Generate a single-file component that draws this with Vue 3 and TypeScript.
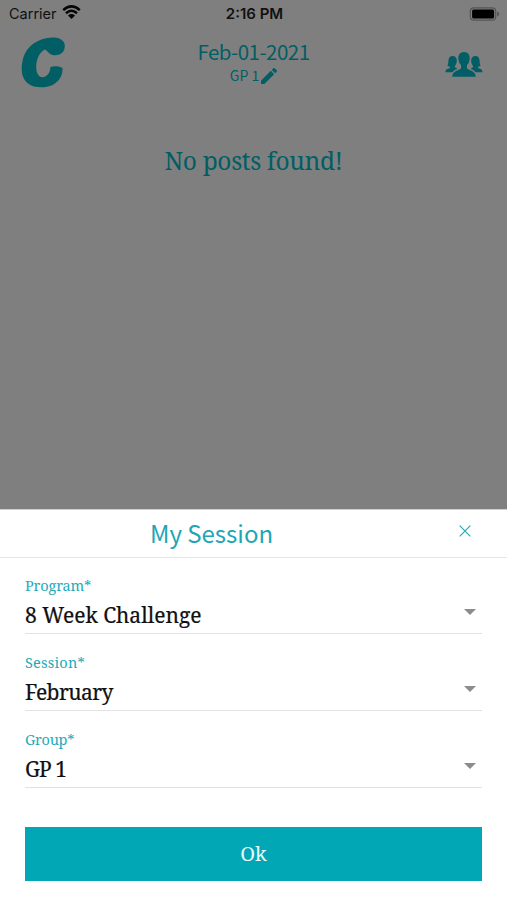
<script setup lang="ts">
import { ref } from 'vue'

interface Field {
  id: string
  label: string
  value: string
}

const date = ref('Feb-01-2021')
const group = ref('GP 1')
const fields = ref<Field[]>([
  { id: 'program', label: 'Program*', value: '8 Week Challenge' },
  { id: 'session', label: 'Session*', value: 'February' },
  { id: 'team', label: 'Group*', value: 'GP 1' },
])
</script>

<template>
  <div class="screen">
    <section class="feed">
      <div class="status">
        <div class="carrier">
          <span>Carrier</span>
          <svg class="wifi" width="19" height="15" viewBox="0 0 19 15">
            <path d="M1.2 5.1Q9.5-2.3 17.8 5.1M4 8.2Q9.5 3.4 15 8.2" fill="none" stroke="#050505" stroke-width="2.5" />
            <path d="M6 10.4Q9.5 7.5 13 10.4L9.5 14Z" fill="#050505" />
          </svg>
        </div>
        <span class="clock">2:16 PM</span>
        <svg class="battery" width="31" height="14" viewBox="0 0 31 14">
          <rect x="1.3" y=".8" width="25.4" height="12.4" rx="3.5" fill="none" stroke="#555" stroke-width="1.2" />
          <rect x="3.1" y="2.4" width="22" height="9.2" rx="1.6" fill="#000" />
          <path d="M28.2 4.6Q30.4 5.4 30.4 7T28.2 9.4Z" fill="#555" />
        </svg>
      </div>
      <header class="header">
        <svg class="logo" width="46" height="53" viewBox="0 0 46 53">
          <path d="M26 1C33-.2 40 .5 42.8 5C45 9.5 43.5 15.5 38.5 17.6C34 19.2 30 18 28 16C26.3 14.3 25 12.6 23.8 12.4C18.5 15 15.4 22 15.2 29.5C15.2 36 17.5 40.3 21.5 40.3C25.5 40.3 29.2 36 29.4 30C33 28.8 38 28.8 41.5 31C42 38 38.5 44 32.5 47.5C26 51.2 13.5 51.7 7 46.5C1 41.7-.1 34 1.1 26C3.1 12.5 12 3.7 26 1Z" fill="#015e65" />
        </svg>
        <div class="heading">
          <div class="date">{{ date }}</div>
          <div class="group">
            <span>{{ group }}</span>
            <svg width="16" height="16" viewBox="3 3 18 18">
              <path d="M3 17.25V21h3.75L17.8 9.94 14.06 6.2 3 17.25ZM20.7 7.04a1 1 0 0 0 0-1.41L18.37 3.3a1 1 0 0 0-1.41 0L15.13 5.12l3.75 3.75 1.82-1.83Z" fill="#015e65" />
            </svg>
          </div>
        </div>
        <svg class="people" width="38" height="26" viewBox="0 0 38 26">
          <g fill="#015e65">
            <path d="M7.5 4C10.6 4 12 6 11.8 9C11.7 12.6 9.8 13 10 15.2L12.5 16.8Q8.5 18.2 7.5 20.3H.5C.5 17.4 2.3 17 5 16.1V14.8L2.4 14Q3.4 12.7 3.4 9C3.4 5.9 5 4 7.5 4Z" />
            <path d="M30.5 4C27.4 4 26 6 26.2 9C26.3 12.6 28.2 13 28 15.2L25.5 16.8Q29.5 18.2 30.5 20.3H37.5C37.5 17.4 35.7 17 33 16.1V14.8L35.6 14Q34.6 12.7 34.6 9C34.6 5.9 33 4 30.5 4Z" />
            <path d="M19 0C23 0 25.2 3.2 24.6 7.2Q24.2 11 22 13V16.3C23 18.5 30.5 18.2 30.8 24.7H7.2C7.5 18.2 15 18.5 16 16.3V13Q13.8 11 13.4 7.2C12.8 3.2 15 0 19 0Z" />
          </g>
        </svg>
      </header>
      <p class="empty">No posts found!</p>
    </section>

    <section class="sheet">
      <div class="title-bar">
        <h2 class="title">My Session</h2>
        <svg class="close" width="12" height="12" viewBox="0 0 12 12">
          <path d="M.7.7 11.3 11.3M11.3.7.7 11.3" stroke="#1eabbb" stroke-width="1.2" />
        </svg>
      </div>
      <div class="form">
        <div v-for="field in fields" :key="field.id" class="field" :class="field.id">
          <div class="label">{{ field.label }}</div>
          <div class="row">
            <span class="value">{{ field.value }}</span>
            <svg width="12" height="6" viewBox="0 0 12 6"><path d="M0 0H12L6 6Z" fill="#8c8c8c" /></svg>
          </div>
        </div>
        <button class="ok" type="button">Ok</button>
      </div>
    </section>
  </div>
</template>

<style>
body {
  margin: 0;
  background: #fff;
}
</style>

<style scoped>
.screen {
  width: 507px;
  height: 900px;
  overflow: hidden;
  display: flex;
  flex-direction: column;
  background: #fff;
  font-family: "Roboto Slab", "Noto Serif", "DejaVu Serif", serif;
}
.feed {
  box-sizing: border-box;
  height: 510px;
  flex: none;
  border-bottom: 1px solid #d0d0d0;
  background: #7f7f7f;
  color: #015e65;
}
.status {
  height: 28px;
  display: grid;
  grid-template-columns: 1fr auto 1fr;
  align-items: center;
  padding: 0 7px 0 9px;
  font: 14.5px/28px Inter, "Liberation Sans", sans-serif;
  color: #111;
}
.carrier {
  display: flex;
  align-items: center;
  gap: 5px;
}
.wifi {
  margin-top: -3px;
}
.clock {
  font-size: 15px;
  font-weight: 600;
}
.battery {
  justify-self: end;
  margin-top: -1px;
}
.header {
  height: 72px;
  display: grid;
  grid-template-columns: 1fr auto 1fr;
  align-items: start;
  padding: 0 24px 0 21px;
}
.logo {
  margin-top: 9px;
}
.heading {
  padding: 8px 0 0 3px;
  text-align: center;
  font-family: "Noto Sans CJK SC", sans-serif;
}
.date {
  font-size: 20.5px;
  line-height: 30px;
  letter-spacing: -0.5px;
}
.group {
  display: flex;
  justify-content: center;
  align-items: center;
  gap: 2px;
  font-size: 14px;
  line-height: 19px;
}
.people {
  justify-self: end;
  margin-top: 24px;
}
.empty {
  margin: 43px 0 0;
  text-align: center;
  font-size: 24.5px;
  letter-spacing: -0.35px;
  line-height: 36px;
}
.sheet {
  flex: 1;
}
.title-bar {
  box-sizing: border-box;
  height: 48px;
  display: flex;
  align-items: center;
  border-bottom: 1px solid #e6e6e6;
  padding-right: 36px;
}
.title {
  flex: 1;
  margin: -2px 0 0;
  padding-right: 36px;
  text-align: center;
  font: 400 24px/46px "Noto Sans CJK SC", sans-serif;
  color: #1ea6b5;
}
.close {
  margin-top: -5px;
}
.form {
  padding: 0 25px;
}
.field {
  box-sizing: border-box;
  height: 77px;
  padding-top: 18px;
  border-bottom: 1px solid #e2e2e2;
}
.program {
  height: 76px;
  padding-top: 17px;
}
.label {
  font-size: 14.5px;
  line-height: 20px;
  letter-spacing: -0.15px;
  color: #1cabb9;
}
.session .label {
  letter-spacing: 0.2px;
}
.team .label {
  letter-spacing: -0.3px;
}
.row {
  display: flex;
  justify-content: space-between;
  align-items: center;
  height: 39px;
  padding-right: 6px;
}
.row svg {
  margin-top: -6px;
}
.value {
  font-size: 21px;
  color: #111;
  -webkit-text-stroke: 0.2px #111;
}
.session .value {
  letter-spacing: -0.6px;
}
.team .value {
  letter-spacing: -1px;
}
.ok {
  display: block;
  width: 100%;
  height: 54px;
  margin-top: 39px;
  padding: 0;
  border: 0;
  background: #02a7b5;
  color: #e9fafa;
  font: 20px/54px "Roboto Slab", "Noto Serif", "DejaVu Serif", serif;
}
</style>
